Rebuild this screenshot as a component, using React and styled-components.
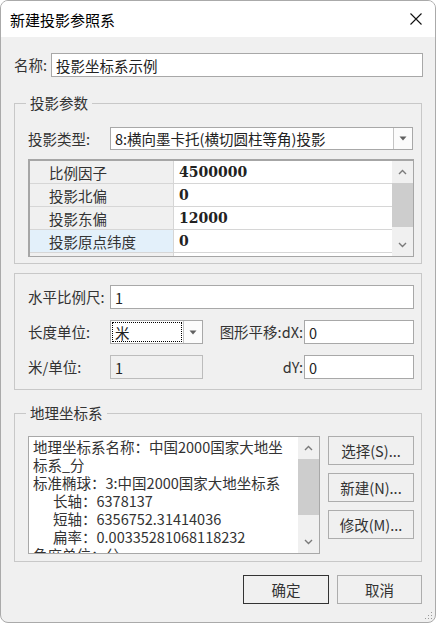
import React from "react";
import styled, { createGlobalStyle } from "styled-components";

const GlobalStyle = createGlobalStyle`
  html, body { margin: 0; padding: 0; background: #ffffff; }
  * { box-sizing: border-box; }
`;

const uiFont = `"Noto Sans CJK SC", "Microsoft YaHei", sans-serif`;

const Window = styled.div`
  position: relative;
  width: 436px;
  height: 623px;
  border: 1px solid #aaaaaa;
  border-radius: 8px;
  overflow: hidden;
  background: #f0f0f0;
  font-family: ${uiFont};
  font-size: 14.5px;
  color: #333333;
  display: flex;
  flex-direction: column;
`;

const TitleBar = styled.div`
  height: 36px;
  flex: none;
  background: #ffffff;
  display: flex;
  align-items: center;
  justify-content: space-between;
  padding: 0 13px 0 9px;
`;

const Title = styled.span`
  font-size: 15px;
  color: #000000;
`;

const Body = styled.div`
  flex: 1;
  display: flex;
  flex-direction: column;
  padding: 16px 13px 0 13px;
`;

const NameRow = styled.div`
  display: flex;
  align-items: center;
  gap: 4px;
  height: 24px;
  margin-right: -1px;
`;

const Label = styled.span`
  white-space: nowrap;
  line-height: 20px;
  text-align: ${({ $right }) => ($right ? "right" : "left")};
  padding-right: ${({ $right }) => ($right ? "1px" : "0")};
`;

const TextBox = styled.div`
  height: 24px;
  flex: 1;
  display: flex;
  align-items: center;
  padding-left: 4px;
  border: 1px solid ${({ $disabled }) => ($disabled ? "#bcbcbc" : "#a8a8a8")};
  background: ${({ $disabled }) => ($disabled ? "#f0f0f0" : "#ffffff")};
  color: #222222;
  white-space: nowrap;
  overflow: hidden;
  grid-column: ${({ $span }) => $span || "auto"};
`;

const Group = styled.fieldset`
  margin: ${({ $mt }) => $mt}px 0 0;
  border: 1px solid #c8c8c8;
  padding: ${({ $pt }) => $pt}px 7px ${({ $pb }) => $pb}px 13px;
  min-width: 0;
`;

const Legend = styled.legend`
  padding: 0 4px;
  margin-left: -2px;
  line-height: 20px;
  height: 20px;
`;

const TypeRow = styled.div`
  display: grid;
  grid-template-columns: 82px 1fr;
  align-items: center;
  margin-right: 1px;
  margin-bottom: 9px;
`;

const Combo = styled.div`
  height: ${({ $h }) => $h || 23}px;
  display: flex;
  border: 1px solid #a8a8a8;
  background: #ffffff;
`;

const ComboText = styled.div`
  flex: 1;
  display: flex;
  align-items: center;
  padding-left: 3px;
  margin: 1px;
  white-space: nowrap;
  overflow: hidden;
  color: #222222;
  outline: ${({ $focus }) => ($focus ? "1px dotted #000000" : "none")};
  outline-offset: -1px;
`;

const ComboButton = styled.div`
  width: 19px;
  flex: none;
  border-left: 1px solid #c4c4c4;
  background: #fbfbfb;
  display: flex;
  align-items: center;
  justify-content: center;
`;

const PropGrid = styled.div`
  height: 98px;
  display: flex;
  border-style: solid;
  border-color: #a6a6a6;
  border-width: 2px 1px 1px 2px;
  background: #ffffff;
`;

const PropRows = styled.div`
  flex: 1;
  overflow: hidden;
`;

const PropRow = styled.div`
  display: grid;
  grid-template-columns: 144px 1fr;
  height: 23px;
  border-bottom: 1px solid #d6d6d6;
`;

const PropName = styled.div`
  display: flex;
  align-items: center;
  padding-left: 19px;
  background: ${({ $selected }) => ($selected ? "#e3f0fa" : "#f0f0f0")};
  border-right: 1px solid #d6d6d6;
  color: #333333;
`;

const PropValue = styled.div`
  display: flex;
  align-items: center;
  padding-left: 5px;
  font-family: "DejaVu Serif", "Liberation Serif", serif;
  font-weight: bold;
  font-size: 14px;
  color: #222222;
`;

const ScrollBar = styled.div`
  width: 21px;
  flex: none;
  background: #f0f0f0;
  display: flex;
  flex-direction: column;
`;

const ScrollArrow = styled.div`
  height: 22px;
  flex: none;
  display: flex;
  align-items: center;
  justify-content: center;
`;

const ScrollTrack = styled.div`
  flex: 1;
  display: flex;
  flex-direction: column;
`;

const ScrollThumb = styled.div`
  height: ${({ $h }) => $h}px;
  background: #cdcdcd;
`;

const FormGrid = styled.div`
  display: grid;
  grid-template-columns: 82px 93px 101px 1fr;
  grid-auto-rows: 24px;
  row-gap: 11px;
  align-items: center;
`;

const GeoRow = styled.div`
  display: flex;
  gap: 8px;
  align-items: flex-start;
`;

const GeoBox = styled.div`
  width: 292px;
  height: 118px;
  display: flex;
  border: 1px solid #a8a8a8;
  background: #ffffff;
`;

const GeoText = styled.div`
  flex: 1;
  overflow: hidden;
  padding: 1px 0 0 4px;
`;

const GeoLine = styled.div`
  line-height: 18px;
  height: 18px;
  white-space: nowrap;
  padding-left: ${({ $indent }) => ($indent ? 20 : 0)}px;
  color: #333333;
`;

const SideButtons = styled.div`
  display: flex;
  flex-direction: column;
  gap: 8px;
`;

const Button = styled.div`
  width: ${({ $w }) => $w || 86}px;
  height: 29px;
  display: flex;
  align-items: center;
  justify-content: center;
  border: 1px solid ${({ $default }) => ($default ? "#333333" : "#adadad")};
  background: #f0f0f0;
  color: #333333;
`;

const Footer = styled.div`
  display: flex;
  justify-content: flex-end;
  gap: 8px;
  margin-top: 13px;
`;

const Grip = styled.svg`
  position: absolute;
  right: 2px;
  bottom: 2px;
`;

const Caret = () => (
  <svg width="8" height="5" viewBox="0 0 8 5">
    <path d="M0.5 0.5 H7.5 L4 4.5 Z" fill="#606060" />
  </svg>
);

const Chevron = ({ down }) => (
  <svg width="9" height="6" viewBox="0 0 9 6">
    <polyline
      points={down ? "1,1 4.5,4.5 8,1" : "1,5 4.5,1.5 8,5"}
      fill="none"
      stroke="#7a7a7a"
      strokeWidth="1.4"
    />
  </svg>
);

const Scroller = ({ top, thumb }) => (
  <ScrollBar>
    <ScrollArrow>
      <Chevron />
    </ScrollArrow>
    <ScrollTrack>
      <ScrollThumb $h={thumb} style={{ marginTop: top }} />
    </ScrollTrack>
    <ScrollArrow>
      <Chevron down />
    </ScrollArrow>
  </ScrollBar>
);

const params = [
  { name: "比例因子", value: "4500000" },
  { name: "投影北偏", value: "0" },
  { name: "投影东偏", value: "12000" },
  { name: "投影原点纬度", value: "0", selected: true },
  { name: "", value: "" },
];

const geoLines = [
  { text: "地理坐标系名称：中国2000国家大地坐" },
  { text: "标系_分" },
  { text: "标准椭球：3:中国2000国家大地坐标系" },
  { text: "长轴：6378137", indent: true },
  { text: "短轴：6356752.31414036", indent: true },
  { text: "扁率：0.00335281068118232", indent: true },
  { text: "角度单位：分" },
];

export default function App() {
  return (
    <>
      <GlobalStyle />
      <Window>
        <TitleBar>
          <Title>新建投影参照系</Title>
          <svg width="12" height="12" viewBox="0 0 12 12">
            <path d="M0.5 0.5 L11.5 11.5 M11.5 0.5 L0.5 11.5" stroke="#111" strokeWidth="1.1" />
          </svg>
        </TitleBar>
        <Body>
          <NameRow>
            <Label>名称:</Label>
            <TextBox>投影坐标系示例</TextBox>
          </NameRow>

          <Group $mt={16} $pt={14} $pb={6}>
            <Legend>投影参数</Legend>
            <TypeRow>
              <Label>投影类型:</Label>
              <Combo>
                <ComboText>8:横向墨卡托(横切圆柱等角)投影</ComboText>
                <ComboButton>
                  <Caret />
                </ComboButton>
              </Combo>
            </TypeRow>
            <PropGrid>
              <PropRows>
                {params.map((p, i) => (
                  <PropRow key={i}>
                    <PropName $selected={p.selected}>{p.name}</PropName>
                    <PropValue>{p.value}</PropValue>
                  </PropRow>
                ))}
              </PropRows>
              <Scroller top={0} thumb={44} />
            </PropGrid>
          </Group>

          <Group $mt={9} $pt={11} $pb={10}>
            <FormGrid>
              <Label>水平比例尺:</Label>
              <TextBox $span="2 / 5">1</TextBox>
              <Label>长度单位:</Label>
              <Combo $h={24}>
                <ComboText $focus>米</ComboText>
                <ComboButton>
                  <Caret />
                </ComboButton>
              </Combo>
              <Label $right>图形平移:dX:</Label>
              <TextBox>0</TextBox>
              <Label>米/单位:</Label>
              <TextBox $disabled>1</TextBox>
              <Label $right>dY:</Label>
              <TextBox>0</TextBox>
            </FormGrid>
          </Group>

          <Group $mt={13} $pt={13} $pb={7}>
            <Legend>地理坐标系</Legend>
            <GeoRow>
              <GeoBox>
                <GeoText>
                  {geoLines.map((l, i) => (
                    <GeoLine key={i} $indent={l.indent}>
                      {l.text}
                    </GeoLine>
                  ))}
                </GeoText>
                <Scroller top={0} thumb={56} />
              </GeoBox>
              <SideButtons>
                <Button>选择(S)...</Button>
                <Button>新建(N)...</Button>
                <Button>修改(M)...</Button>
              </SideButtons>
            </GeoRow>
          </Group>

          <Footer>
            <Button $default>确定</Button>
            <Button $w={85}>取消</Button>
          </Footer>
        </Body>
        <Grip width="10" height="10" viewBox="0 0 10 10">
          <rect x="8" y="2" width="1" height="1" fill="#999" />
          <rect x="5" y="5" width="1" height="1" fill="#999" />
          <rect x="8" y="5" width="1" height="1" fill="#999" />
          <rect x="2" y="8" width="1" height="1" fill="#999" />
          <rect x="5" y="8" width="1" height="1" fill="#999" />
          <rect x="8" y="8" width="1" height="1" fill="#999" />
        </Grip>
      </Window>
    </>
  );
}
